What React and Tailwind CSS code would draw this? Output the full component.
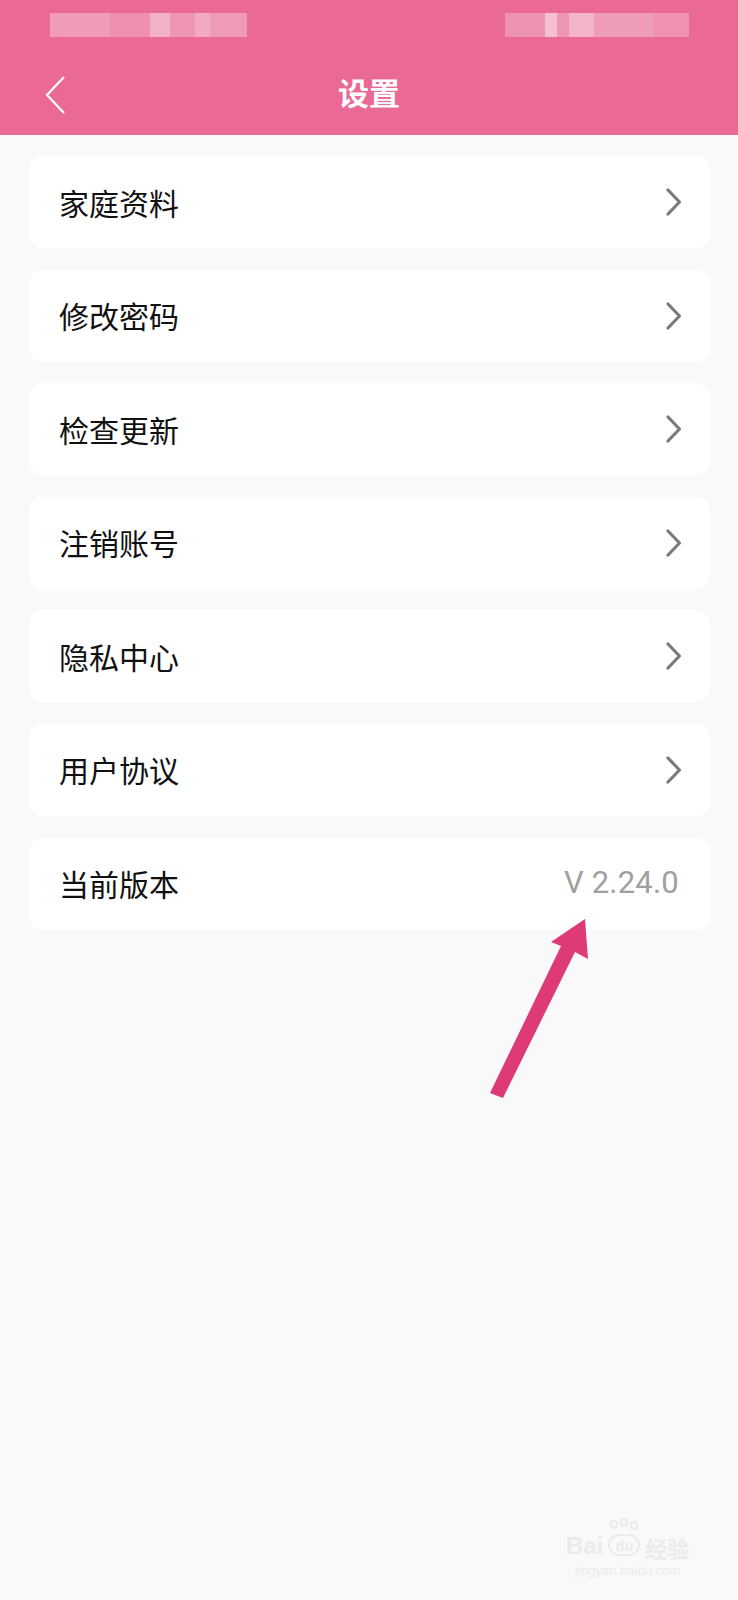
const items = ['家庭资料', '修改密码', '检查更新', '注销账号', '隐私中心', '用户协议'];

function Chevron() {
  return (
    <svg width="18" height="30" viewBox="0 0 18 30" fill="none" className="-mr-[1px]">
      <path d="M3 3 L14.5 15 L3 27" stroke="#7a7a7a" strokeWidth="3.2" strokeLinecap="round" strokeLinejoin="round" />
    </svg>
  );
}

function Row({ label, right, pr = 'pr-[28px]' }) {
  return (
    <div className={`flex items-center justify-between h-[92px] pl-[30px] ${pr} bg-white rounded-[14px]`}>
      <span className="text-[30px] text-[#111]">{label}</span>
      {right}
    </div>
  );
}

export default function App() {
  return (
    <div
      className="relative w-[738px] h-[1600px] bg-[#f9f9f9] overflow-hidden"
      style={{ fontFamily: '"Noto Sans CJK SC", "Noto Sans", sans-serif' }}
    >
      {/* Header */}
      <header className="h-[135px] bg-[#eb6995] flex flex-col">
        {/* blurred status bar */}
        <div className="h-[50px] flex items-start justify-between pt-[13px] pl-[50px] pr-[49px]">
          <div className="flex h-[24px] w-[197px]">
            <div className="w-[60px] bg-[#f09bb8]" />
            <div className="w-[40px] bg-[#ee8fb0]" />
            <div className="w-[20px] bg-[#f3b1c8]" />
            <div className="w-[25px] bg-[#ef96b5]" />
            <div className="w-[15px] bg-[#f2a9c2]" />
            <div className="w-[37px] bg-[#ef9ab8]" />
          </div>
          <div className="flex h-[24px] w-[184px]">
            <div className="w-[40px] bg-[#ee92b2]" />
            <div className="w-[12px] bg-[#f5bfd2]" />
            <div className="w-[12px] bg-[#ee95b4]" />
            <div className="w-[25px] bg-[#f3b3c9]" />
            <div className="w-[60px] bg-[#ef9cb9]" />
            <div className="w-[35px] bg-[#ee91b2]" />
          </div>
        </div>
        <div className="relative flex-1 flex items-center justify-center">
          <svg
            className="absolute left-[44px] top-[26px]"
            width="22"
            height="38"
            viewBox="0 0 22 38"
            fill="none"
          >
            <path d="M20 1 L3 19 L20 37" stroke="white" strokeWidth="2.2" />
          </svg>
          <h1 className="text-[31px] font-bold text-white leading-none -mt-[2px]">设置</h1>
        </div>
      </header>

      {/* List */}
      <div className="flex flex-col gap-[21.6px] pt-[21px] pl-[29px] pr-[28px]">
        {items.map((label) => (
          <Row key={label} label={label} right={<Chevron />} />
        ))}
        <Row
          label="当前版本"
          pr="pr-[31px]"
          right={
            <span
              className="text-[31px] text-[#a0a0a0] tracking-[0.2px]"
              style={{ fontFamily: 'Roboto, "Noto Sans", sans-serif' }}
            >
              V 2.24.0
            </span>
          }
        />
      </div>

      {/* annotation arrow */}
      <svg className="absolute left-0 top-0 pointer-events-none" width="738" height="1600">
        <polygon
          points="585,919 588,959 575,952 503,1098 490,1093 561,946 551,942"
          fill="#df3a78"
        />
      </svg>

      {/* watermark */}
      <div className="absolute left-[566px] top-[1518px] flex flex-col items-center text-[#ebebeb] pointer-events-none">
        <div className="flex items-end gap-[2px]">
          <span className="text-[24px] font-bold leading-none" style={{ fontFamily: '"Liberation Sans", sans-serif' }}>Bai</span>
          <div className="relative w-[38px] h-[40px]">
            <div className="absolute left-[5px] top-[2px] w-[8px] h-[9px] rounded-full border-2 border-[#ebebeb]" />
            <div className="absolute left-[15px] top-0 w-[8px] h-[9px] rounded-full border-2 border-[#ebebeb]" />
            <div className="absolute left-[25px] top-[3px] w-[8px] h-[9px] rounded-full border-2 border-[#ebebeb]" />
            <div className="absolute left-[3px] top-[16px] w-[32px] h-[22px] rounded-full border-2 border-[#ebebeb] flex items-center justify-center text-[14px] font-bold leading-none">du</div>
          </div>
          <span className="text-[22px] font-bold leading-none">经验</span>
        </div>
        <span className="text-[13px] leading-none mt-[6px]" style={{ fontFamily: '"Liberation Sans", sans-serif' }}>jingyan.baidu.com</span>
      </div>
    </div>
  );
}
